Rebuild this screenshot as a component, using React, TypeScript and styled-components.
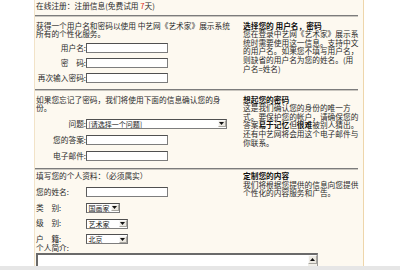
import React from 'react';
import styled, { createGlobalStyle } from 'styled-components';

const Global = createGlobalStyle`
  html, body { margin: 0; padding: 0; background: #ffffff; overflow: hidden; }
  body {
    font-family: "Noto Sans CJK SC", "Noto Sans", sans-serif;
    font-size: 7.7px;
    line-height: 8.6px;
    color: #2a2a2a;
  }
`;

const Page = styled.div`
  width: 400px;
  height: 270px;
  overflow: hidden;
`;

const Panel = styled.div`
  box-sizing: border-box;
  margin-left: 34px;
  width: 330px;
  min-height: 270px;
  padding: 0 5px 0 0;
  background: #fdf9f0;
  border-left: 1px solid #f2e3c8;
  border-right: 1px solid #eed6ab;
`;

const Header = styled.div`
  height: 15px;
  box-sizing: border-box;
  padding: 2.2px 0 0 1px;
  white-space: nowrap;
`;

const Red = styled.span`
  color: #e0301e;
`;

const Rule = styled.div`
  height: 1px;
  background: #7c7c7c;
  border-bottom: 1px solid #c9c6bf;
`;

const Section = styled.div<{ $top: number; $bottom: number }>`
  display: grid;
  grid-template-columns: 207px 1fr;
  padding: ${(p) => p.$top}px 0 ${(p) => p.$bottom}px 1px;
`;

const LeftCol = styled.div`
  display: flex;
  flex-direction: column;
  white-space: nowrap;
`;

const RightCol = styled.div`
  white-space: nowrap;
`;

const Para = styled.div``;

const Heading = styled.div`
  font-weight: 700;
  color: #111;
`;

const B = styled.b`
  font-weight: 700;
  color: #111;
`;

const Fields = styled.div<{ $top: number; $gap: number }>`
  display: flex;
  flex-direction: column;
  margin-top: ${(p) => p.$top}px;
  gap: ${(p) => p.$gap}px;
`;

const Field = styled.div`
  display: flex;
  align-items: center;
  height: 10px;
`;

const Label = styled.span<{ $align: 'left' | 'right' }>`
  width: 50px;
  flex-shrink: 0;
  text-align: ${(p) => p.$align};
  white-space: nowrap;
`;

const TextBox = styled.div`
  box-sizing: border-box;
  width: 82px;
  height: 10px;
  background: #ffffff;
  border: 1px solid #7d7d7d;
  border-top-color: #505050;
  border-left-color: #5c5c5c;
`;

const SelectBox = styled.div<{ $w: number }>`
  box-sizing: border-box;
  width: ${(p) => p.$w}px;
  height: 10px;
  display: flex;
  align-items: stretch;
  background: #ffffff;
  border: 1px solid #7d7d7d;
  border-top-color: #505050;
  border-left-color: #5c5c5c;
`;

const SelectText = styled.span`
  flex: 1;
  padding-left: 1.5px;
  font-size: 7px;
  line-height: 8px;
  white-space: nowrap;
  overflow: hidden;
  color: #1a1a1a;
`;

const ArrowBtn = styled.span`
  box-sizing: border-box;
  width: 8px;
  margin: 0.5px;
  display: flex;
  align-items: center;
  justify-content: center;
  background: #ece9e2;
  border: 1px solid #a9a7a0;
  border-top-color: #f8f8f8;
  border-left-color: #f8f8f8;
`;

const Caret = ({ up }: { up?: boolean }) => (
  <svg width="5" height="3" viewBox="0 0 5 3">
    <path d={up ? 'M0 3 L2.5 0 L5 3 Z' : 'M0 0 L5 0 L2.5 3 Z'} fill="#111" />
  </svg>
);

const Select = ({ w, text }: { w: number; text: string }) => (
  <SelectBox $w={w}>
    <SelectText>{text}</SelectText>
    <ArrowBtn>
      <Caret />
    </ArrowBtn>
  </SelectBox>
);

const AreaLabel = styled.div`
  white-space: nowrap;
`;

const TextArea = styled.div`
  box-sizing: border-box;
  margin-top: 0.7px;
  width: 282px;
  height: 40px;
  display: flex;
  justify-content: flex-end;
  background: #ffffff;
  border: 1px solid #9a9a9a;
  border-top: 2px solid #6a6a6a;
  border-left: 2px solid #6a6a6a;
`;

const ScrollTrack = styled.div`
  width: 9px;
  background: #f1efe9;
  display: flex;
  flex-direction: column;
`;

const ScrollBtn = styled.div`
  box-sizing: border-box;
  height: 9px;
  display: flex;
  align-items: center;
  justify-content: center;
  background: #ece9e2;
  border: 1px solid #a9a7a0;
  border-top-color: #fafafa;
  border-left-color: #fafafa;
`;

const BottomStrip = styled.div`
  position: fixed;
  left: 0;
  bottom: 0;
  width: 400px;
  height: 4px;
  background: #e6e6e6;
`;

export default function App() {
  return (
    <Page>
      <Global />
      <Panel>
        <Header>
          在线注册：注册信息(免费试用 <Red>7</Red>天)
        </Header>
        <Rule />
        <Section $top={4.7} $bottom={6}>
          <LeftCol>
            <Para>
              获得一个用户名和密码以使用 中艺网《艺术家》展示系统
              <br />
              所有的个性化服务。
            </Para>
            <Fields $top={4} $gap={5}>
              <Field>
                <Label $align="right">用户名:</Label>
                <TextBox />
              </Field>
              <Field>
                <Label $align="right">密　码:</Label>
                <TextBox />
              </Field>
              <Field>
                <Label $align="right">再次输入密码:</Label>
                <TextBox />
              </Field>
            </Fields>
          </LeftCol>
          <RightCol>
            <Heading>选择您的 用户名，密码</Heading>
            <Para>
              您在登录中艺网《艺术家》展示系
              <br />
              统时需要使用这一信息。支持中文
              <br />
              的用户名。如果您不填写用户名，
              <br />
              则缺省的用户名为您的姓名。(用
              <br />
              户名=姓名)
            </Para>
          </RightCol>
        </Section>
        <Rule />
        <Section $top={4.8} $bottom={7}>
          <LeftCol>
            <Para>
              如果您忘记了密码，我们将使用下面的信息确认您的身
              <br />
              份。
            </Para>
            <Fields $top={6} $gap={6}>
              <Field>
                <Label $align="right">问题:</Label>
                <Select w={141} text="[请选择一个问题]" />
              </Field>
              <Field>
                <Label $align="right">您的答案:</Label>
                <TextBox />
              </Field>
              <Field>
                <Label $align="right">电子邮件:</Label>
                <TextBox />
              </Field>
            </Fields>
          </LeftCol>
          <RightCol>
            <Heading>想起您的密码</Heading>
            <Para>
              这是我们确认您的身份的唯一方
              <br />
              式。要保护您的帐户，请确保您的
              <br />
              答案<B>易于记忆</B>但<B>很难</B>被别人猜出。
              <br />
              还有中艺网将会用这个电子邮件与
              <br />
              你联系。
            </Para>
          </RightCol>
        </Section>
        <Rule />
        <Section $top={2.4} $bottom={0}>
          <LeftCol>
            <Para>填写您的个人资料：（必须属实）</Para>
            <Fields $top={6.5} $gap={5.6}>
              <Field>
                <Label $align="left">您的姓名:</Label>
                <TextBox />
              </Field>
              <Field>
                <Label $align="left">类　别:</Label>
                <Select w={34} text="国画家" />
              </Field>
              <Field>
                <Label $align="left">级　别:</Label>
                <Select w={42} text="艺术家" />
              </Field>
              <Field>
                <Label $align="left">户　籍:</Label>
                <Select w={42} text="北京" />
              </Field>
            </Fields>
            <AreaLabel>个人简介:</AreaLabel>
            <TextArea>
              <ScrollTrack>
                <ScrollBtn>
                  <Caret up />
                </ScrollBtn>
              </ScrollTrack>
            </TextArea>
          </LeftCol>
          <RightCol>
            <Heading>定制您的内容</Heading>
            <Para>
              我们将根据您提供的信息向您提供
              <br />
              个性化的内容服务和广告。
            </Para>
          </RightCol>
        </Section>
      </Panel>
      <BottomStrip />
    </Page>
  );
}
